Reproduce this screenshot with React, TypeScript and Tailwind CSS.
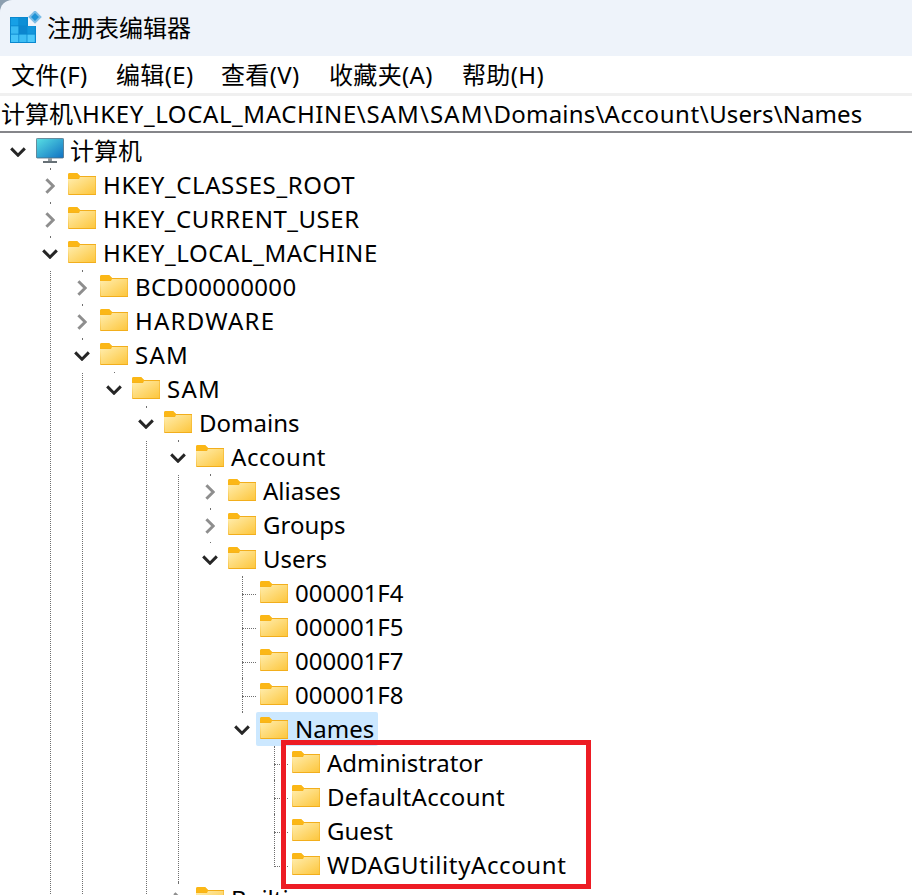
import React from "react";

const FONT = "font-['Noto_Sans','Noto_Sans_CJK_SC',sans-serif]";

function Folder() {
  return (
    <svg width="28" height="22" viewBox="0 0 28 22" className="mb-[2px] shrink-0">
      <defs>
        <linearGradient id="fg" x1="0" y1="0" x2="1" y2="1">
          <stop offset="0" stopColor="#ffeeb0" />
          <stop offset="1" stopColor="#fdc63c" />
        </linearGradient>
      </defs>
      <path d="M0 2a2 2 0 0 1 2-2h7l3 3h16v19H1a1 1 0 0 1-1-1z" fill="#f2ae1c" />
      <path d="M0 2a2 2 0 0 1 2-2h7l3 3v2.5H0z" fill="#fbb716" />
      <path d="M0 6h11l1-2h15.5v17H0.5z" fill="url(#fg)" />
    </svg>
  );
}

function Monitor() {
  return (
    <svg width="28" height="25" viewBox="0 0 28 25" className="mb-[1px] shrink-0">
      <defs>
        <linearGradient id="mg" x1="0" y1="0" x2="1" y2="1">
          <stop offset="0" stopColor="#58e0e4" />
          <stop offset="1" stopColor="#1070c2" />
        </linearGradient>
      </defs>
      <rect x="0.4" y="0.4" width="27.2" height="19.6" rx="1" fill="url(#mg)" stroke="#4f6b7d" strokeWidth="0.8" />
      <rect x="12" y="20" width="4" height="3" fill="#929ba1" />
      <rect x="7" y="23" width="14" height="2" fill="#677076" />
    </svg>
  );
}

function RegIcon() {
  const rows = [
    ["#16a0e6", "#0d8fd6", null],
    ["#38b9f2", "#0c86cf", "#1396dc"],
    ["#46c4f8", "#3dbdf4", "#4cc8fa"],
  ];
  return (
    <svg width="32" height="32" viewBox="0 0 32 32" className="mb-[2px] shrink-0">
      <path d="M0 6h18v9h8v17H0z" fill="#0a88cf" />
      {rows.map((row, r) =>
        row.map((fill, c) =>
          fill ? (
            <rect key={`${r}-${c}`} x={1 + c * 8.2} y={7 + r * 8.3} width="7.4" height="7.4" fill={fill} />
          ) : null
        )
      )}
      <path d="M25 0.6l5.4 5.4-5.4 5.4-5.4-5.4z" fill="#1f93d6" stroke="#7dbde6" strokeWidth="2" />
    </svg>
  );
}

function Chevron({ open }: { open: boolean }) {
  return open ? (
    <svg width="16" height="10" viewBox="0 0 16 10">
      <path d="M1.2 1.4L8 8.2l6.8-6.8" fill="none" stroke="#262626" strokeWidth="3" />
    </svg>
  ) : (
    <svg width="10" height="16" viewBox="0 0 10 16">
      <path d="M1.4 1.2L8.2 8l-6.8 6.8" fill="none" stroke="#8e8e8e" strokeWidth="3" />
    </svg>
  );
}

type NodeProps = {
  label: string;
  open?: boolean;
  leaf?: boolean;
  last?: boolean;
  root?: boolean;
  selected?: boolean;
  track?: string;
  children?: React.ReactNode;
};

function Node({ label, open, leaf, last, root, selected, track, children }: NodeProps) {
  return (
    <div className="relative">
      {!root && (
        <div
          className={`absolute left-[14px] top-0 border-l border-dotted border-[#6f6f6f] ${
            last ? "h-[19px]" : "bottom-0"
          }`}
        />
      )}
      <div className="relative flex h-[34px] items-center">
        <div className="relative flex h-[32px] w-[28px] shrink-0 items-center justify-center">
          {leaf ? (
            <div className="absolute left-[14px] top-[17px] w-[14px] border-t border-dotted border-[#6f6f6f]" />
          ) : (
            <div className="flex h-full w-full translate-y-[1px] items-center justify-center bg-white">
              <Chevron open={!!open} />
            </div>
          )}
        </div>
        <div className={`flex h-[34px] items-center rounded-[2px] px-1 ${selected ? "bg-[#cce8ff]" : ""}`}>
          {root ? <Monitor /> : <Folder />}
          <span className={`whitespace-nowrap ${root ? "ml-[6px]" : "ml-[7px]"} ${track ?? ""}`}>{label}</span>
        </div>
      </div>
      {children && <div className="ml-[32px]">{children}</div>}
    </div>
  );
}

export default function App() {
  return (
    <div className={`relative h-[895px] w-[912px] overflow-hidden bg-white text-[24px] leading-[34px] text-black ${FONT}`}>
      <div className="bg-[#8c9fb0]">
        <div className="flex h-[56px] items-center rounded-tl-[12px] bg-[#eef3fa] pl-[10px]">
          <RegIcon />
          <span className="ml-[6px] -translate-x-[1px]">注册表编辑器</span>
        </div>
      </div>
      <div className="flex h-[37px] items-center tracking-[0.35px]">
        <span className="ml-[11px] w-[105px]">文件(F)</span>
        <span className="w-[105px]">编辑(E)</span>
        <span className="w-[108px]">查看(V)</span>
        <span className="w-[133px]">收藏夹(A)</span>
        <span>帮助(H)</span>
      </div>
      <div className="h-[3px] bg-[#f0f0f0]" />
      <div className="box-content flex h-[35px] items-center border-b-2 border-[#85868a] pl-[1px]">
        <span className="whitespace-nowrap">
          计算机\
          <span className="tracking-[0.6px]">HKEY_LOCAL_MACHINE\</span>
          <span className="tracking-[1.1px]">SAM\SAM\</span>
          <span className="tracking-[0.2px]">Domains\</span>
          <span className="tracking-[0.55px]">Account\</span>
          <span className="tracking-[0.1px]">Users\Names</span>
        </span>
      </div>
      <div className="pl-[4px] pt-[1px]">
        <Node label="计算机" open root>
          <Node label="HKEY_CLASSES_ROOT" track="tracking-[0.6px]" />
          <Node label="HKEY_CURRENT_USER" track="tracking-[0.55px]" />
          <Node label="HKEY_LOCAL_MACHINE" open track="tracking-[0.6px]">
            <Node label="BCD00000000" track="tracking-[0.3px]" />
            <Node label="HARDWARE" track="tracking-[1.25px]" />
            <Node label="SAM" open track="tracking-[1.3px]">
              <Node label="SAM" open last track="tracking-[1.3px]">
                <Node label="Domains" open>
                  <Node label="Account" open track="tracking-[0.55px]">
                    <Node label="Aliases" />
                    <Node label="Groups" />
                    <Node label="Users" open last>
                      <Node label="000001F4" leaf />
                      <Node label="000001F5" leaf />
                      <Node label="000001F7" leaf />
                      <Node label="000001F8" leaf />
                      <Node label="Names" open last selected>
                        <Node label="Administrator" leaf />
                        <Node label="DefaultAccount" leaf track="tracking-[0.3px]" />
                        <Node label="Guest" leaf />
                        <Node label="WDAGUtilityAccount" leaf last track="tracking-[0.6px]" />
                      </Node>
                    </Node>
                  </Node>
                  <Node label="Builtin" />
                </Node>
              </Node>
            </Node>
          </Node>
        </Node>
      </div>
      <div className="absolute left-[281px] top-[740px] h-[149px] w-[310px] border-[5px] border-[#ed1c24]" />
    </div>
  );
}
